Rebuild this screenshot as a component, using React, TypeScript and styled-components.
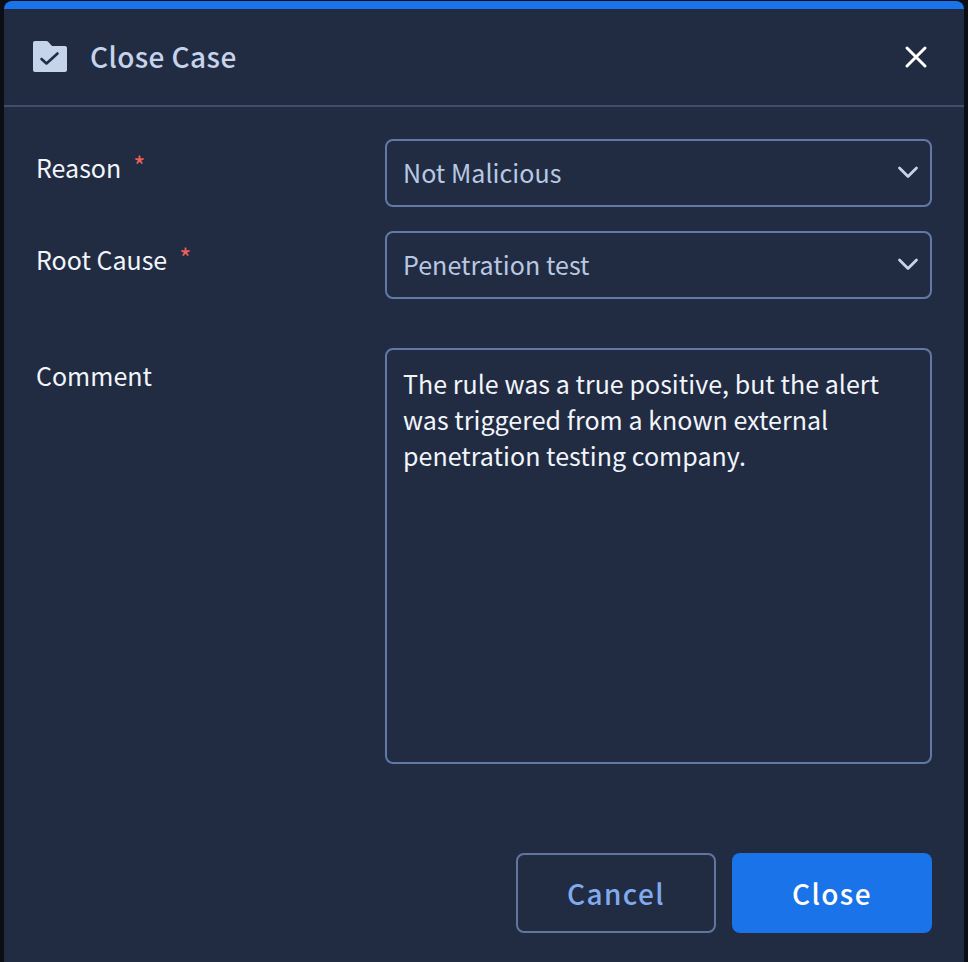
import React from "react";
import styled, { createGlobalStyle } from "styled-components";

const Global = createGlobalStyle`
  html, body { margin: 0; padding: 0; height: 100%; background: #0b0e15; overflow: hidden; }
  body { font-family: "Noto Sans CJK SC", "Noto Sans", sans-serif; }
`;

const Page = styled.div`
  height: 962px;
  padding: 1px 4px 0;
  box-sizing: border-box;
  overflow: hidden;
`;

const Dialog = styled.div`
  height: 980px;
  box-sizing: border-box;
  background: #212c43;
  border-top: 8px solid #1a73e8;
  border-radius: 8px 8px 0 0;
`;

const Header = styled.header`
  height: 98px;
  box-sizing: border-box;
  display: flex;
  align-items: center;
  padding: 0 36px 0 29px;
  border-bottom: 2px solid #414d6c;
`;

const Title = styled.h2`
  flex: 1;
  margin: -2px 0 0 23px;
  font-size: 28px;
  font-weight: 500;
  letter-spacing: 0.4px;
  color: #c5d3eb;
`;

const CloseIcon = styled.button`
  all: unset;
  display: flex;
  width: 24px;
  height: 24px;
`;

const Form = styled.div`
  padding: 32px 32px 0;
  display: grid;
  grid-template-columns: 349px 547px;
  row-gap: 24px;
`;

const Label = styled.label`
  padding-top: 10px;
  font-size: 25px;
  line-height: 36px;
  color: #f2f5fa;
`;

const Star = styled.span`
  margin-left: 12px;
  color: #f0635a;
  font-size: 26px;
  line-height: 1;
  position: relative;
  top: -2px;
`;

const Select = styled.div`
  height: 68px;
  box-sizing: border-box;
  border: 2px solid #6279a8;
  border-radius: 8px;
  display: flex;
  align-items: center;
  justify-content: space-between;
  padding: 0 10px 2px 16px;
  font-size: 25px;
  letter-spacing: 0.05px;
  color: #b9c8e2;
`;

const TextArea = styled.div`
  height: 416px;
  box-sizing: border-box;
  border: 2px solid #6279a8;
  border-radius: 8px;
  padding: 15px 16px;
  margin-top: 25px;
  font-size: 25px;
  line-height: 36px;
  letter-spacing: 0.04px;
  color: #f2f5fa;
`;

const CommentLabel = styled(Label)`
  margin-top: 24px;
`;

const Footer = styled.footer`
  display: flex;
  justify-content: flex-end;
  gap: 16px;
  padding: 89px 32px 0;
`;

const Button = styled.button<{ $primary?: boolean }>`
  width: 200px;
  height: 80px;
  box-sizing: border-box;
  border-radius: 8px;
  font-family: inherit;
  font-size: 28px;
  font-weight: 500;
  letter-spacing: 1.4px;
  border: ${(p) => (p.$primary ? "none" : "2px solid #62759e")};
  background: ${(p) => (p.$primary ? "#1a73e8" : "transparent")};
  color: ${(p) => (p.$primary ? "#ffffff" : "#82abee")};
`;

const Chevron = () => (
  <svg width="24" height="24" viewBox="0 0 24 24" fill="none" stroke="#c5d3eb" strokeWidth="2.8" strokeLinecap="round" strokeLinejoin="round">
    <path d="M3.500 8l8.500 8.500L20.500 8" />
  </svg>
);

export default function App() {
  return (
    <Page>
      <Global />
      <Dialog>
        <Header>
          <svg width="34" height="32" viewBox="0 0 34 32">
            <path
              d="M2 0h11.500c.6 0 1 .2 1.400.6L19 5h13c1.100 0 2 .9 2 2v22c0 1.100-.9 2-2 2H2c-1.100 0-2-.9-2-2V2C0 .9.900 0 2 0z"
              fill="#c5d3eb"
            />
            <path d="M8.500 18l5 4.500 11-10" fill="none" stroke="#212c43" strokeWidth="2.600" strokeLinecap="round" strokeLinejoin="round" />
          </svg>
          <Title>Close Case</Title>
          <CloseIcon aria-label="Close">
            <svg width="24" height="24" viewBox="0 0 24 24" fill="none" stroke="#ffffff" strokeWidth="3" strokeLinecap="round">
              <path d="M3 3l18 18M21 3L3 21" />
            </svg>
          </CloseIcon>
        </Header>
        <Form>
          <Label>
            Reason<Star>*</Star>
          </Label>
          <Select>
            Not Malicious
            <Chevron />
          </Select>
          <Label>
            Root Cause<Star>*</Star>
          </Label>
          <Select>
            Penetration test
            <Chevron />
          </Select>
          <CommentLabel>Comment</CommentLabel>
          <TextArea>
            The rule was a true positive, but the alert was triggered from a known external penetration testing company.
          </TextArea>
        </Form>
        <Footer>
          <Button>Cancel</Button>
          <Button $primary>Close</Button>
        </Footer>
      </Dialog>
    </Page>
  );
}
